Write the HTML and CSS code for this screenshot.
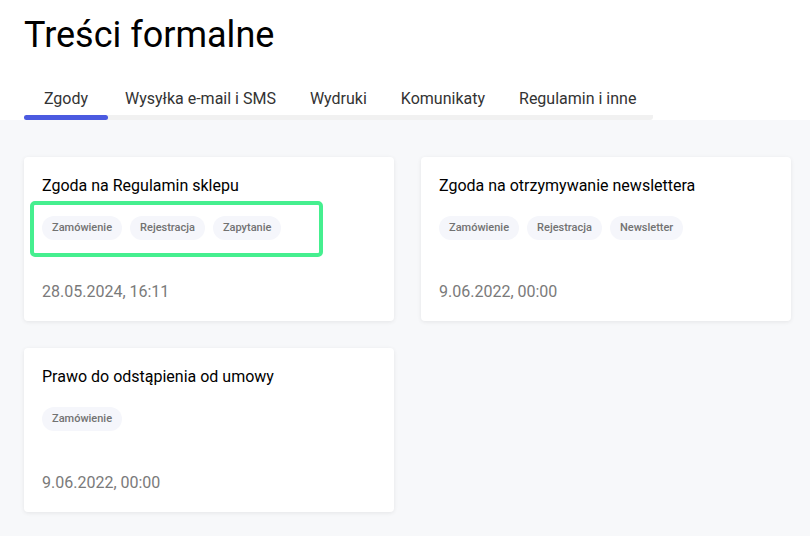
FILE: index.html
```html
<!DOCTYPE html>
<html lang="pl">
<head>
<meta charset="utf-8">
<title>Treści formalne</title>
<link rel="stylesheet" href="styles.css">
</head>
<body>
<header class="header">
  <h1 class="title">Treści formalne</h1>
  <nav class="tabs">
    <a class="tab tab-active">Zgody</a>
    <a class="tab">Wysyłka e-mail i SMS</a>
    <a class="tab">Wydruki</a>
    <a class="tab">Komunikaty</a>
    <a class="tab">Regulamin i inne</a>
  </nav>
</header>
<main class="content">
  <div class="grid">
    <div class="card">
      <div class="card-title">Zgoda na Regulamin sklepu</div>
      <div class="tags">
        <span class="tag">Zamówienie</span>
        <span class="tag">Rejestracja</span>
        <span class="tag">Zapytanie</span>
      </div>
      <div class="date">28.05.2024, 16:11</div>
      <div class="highlight"></div>
    </div>
    <div class="card">
      <div class="card-title">Zgoda na otrzymywanie newslettera</div>
      <div class="tags">
        <span class="tag">Zamówienie</span>
        <span class="tag">Rejestracja</span>
        <span class="tag">Newsletter</span>
      </div>
      <div class="date">9.06.2022, 00:00</div>
    </div>
    <div class="card">
      <div class="card-title">Prawo do odstąpienia od umowy</div>
      <div class="tags">
        <span class="tag">Zamówienie</span>
      </div>
      <div class="date">9.06.2022, 00:00</div>
    </div>
  </div>
</main>
</body>
</html>
```
FILE: styles.css
```css
* { box-sizing: border-box; }
html, body { margin: 0; padding: 0; }
body {
  font-family: Roboto, "Noto Sans", sans-serif;
  background: #f7f8fa;
  color: #111;
  width: 810px;
  height: 536px;
  overflow: hidden;
}
.header {
  background: #fff;
  padding: 13px 24px 0 24px;
}
.title {
  margin: 0;
  font-size: 36px;
  font-weight: 400;
  line-height: 44px;
  color: #000;
}
.tabs {
  display: inline-flex;
  flex-wrap: nowrap;
  margin-top: 30px;
  padding-bottom: 4px;
  border-bottom: 5px solid #f1f1f1;
  border-radius: 0 0 3px 3px;
  position: relative;
}
.tab {
  position: relative;
  flex-shrink: 0;
  white-space: nowrap;
  padding: 0 17px;
  font-size: 16px;
  line-height: 24px;
  color: #333;
  text-align: center;
  min-width: 84px;
}
.tab-active::after {
  content: "";
  position: absolute;
  left: 0;
  right: 0;
  bottom: -9px;
  height: 5px;
  border-radius: 3px;
  background: #4b5ae0;
}
.content {
  padding: 37px 24px;
}
.grid {
  display: grid;
  grid-template-columns: 370px 370px;
  column-gap: 27px;
  row-gap: 27px;
}
.card {
  position: relative;
  background: #fff;
  border-radius: 4px;
  box-shadow: 0 1px 4px rgba(0, 0, 0, 0.08);
  height: 164px;
  padding: 17px 18px 0 18px;
}
.card-title {
  font-size: 16px;
  line-height: 24px;
  font-weight: 400;
  color: #000;
}
.tags {
  display: flex;
  gap: 8px;
  margin-top: 18px;
}
.tag {
  height: 24px;
  line-height: 24px;
  padding: 0 10px;
  border-radius: 12px;
  background: #f5f6fb;
  color: #727272;
  font-size: 11px;
  font-weight: 500;
}
.date {
  margin-top: 40px;
  font-size: 16px;
  line-height: 24px;
  color: #7a7a7a;
}
.highlight {
  position: absolute;
  left: 6px;
  top: 44px;
  width: 293px;
  height: 56px;
  border: 4px solid #45ef8f;
  border-radius: 5px;
  pointer-events: none;
}
```
